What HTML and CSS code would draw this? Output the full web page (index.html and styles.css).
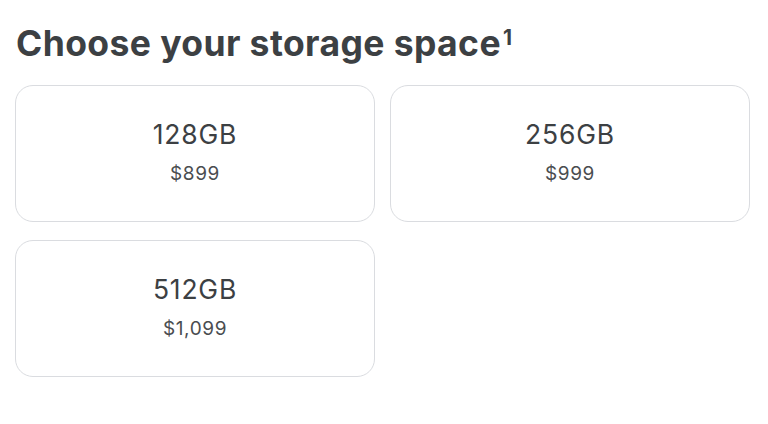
FILE: index.html
```html
<!DOCTYPE html>
<html>
<head>
<meta charset="utf-8">
<link rel="stylesheet" href="styles.css">
</head>
<body>
<main class="page">
  <h1 class="title">Choose your storage space<sup class="note">1</sup></h1>
  <div class="options">
    <div class="option">
      <div class="size">128GB</div>
      <div class="price">$899</div>
    </div>
    <div class="option">
      <div class="size">256GB</div>
      <div class="price">$999</div>
    </div>
    <div class="option">
      <div class="size">512GB</div>
      <div class="price">$1,099</div>
    </div>
  </div>
</main>
</body>
</html>
```
FILE: styles.css
```css
html, body {
  margin: 0;
  padding: 0;
  background: #ffffff;
}
.page {
  padding: 20px 0 0 15px;
  font-family: "Inter", "Lato", sans-serif;
  color: #3c4043;
}
.title {
  margin: 0 0 0 1px;
  font-size: 35.5px;
  line-height: 48px;
  font-weight: 700;
  letter-spacing: 0.4px;
}
.note {
  font-size: 21px;
  vertical-align: top;
  position: relative;
  top: -6px;
  margin-left: 2px;
}
.options {
  margin-top: 17px;
  display: grid;
  grid-template-columns: 360px 360px;
  column-gap: 15px;
  row-gap: 18px;
}
.option {
  box-sizing: border-box;
  height: 137px;
  border: 1.5px solid #dadce0;
  border-radius: 18px;
  display: flex;
  flex-direction: column;
  align-items: center;
  justify-content: center;
  padding-bottom: 4px;
}
.size {
  font-size: 26.5px;
  line-height: 34px;
  font-weight: 400;
  letter-spacing: 0.8px;
  color: #3c4043;
}
.price {
  margin-top: 11px;
  font-size: 19px;
  line-height: 24px;
  letter-spacing: 0.6px;
  color: #4a4d50;
}
```
